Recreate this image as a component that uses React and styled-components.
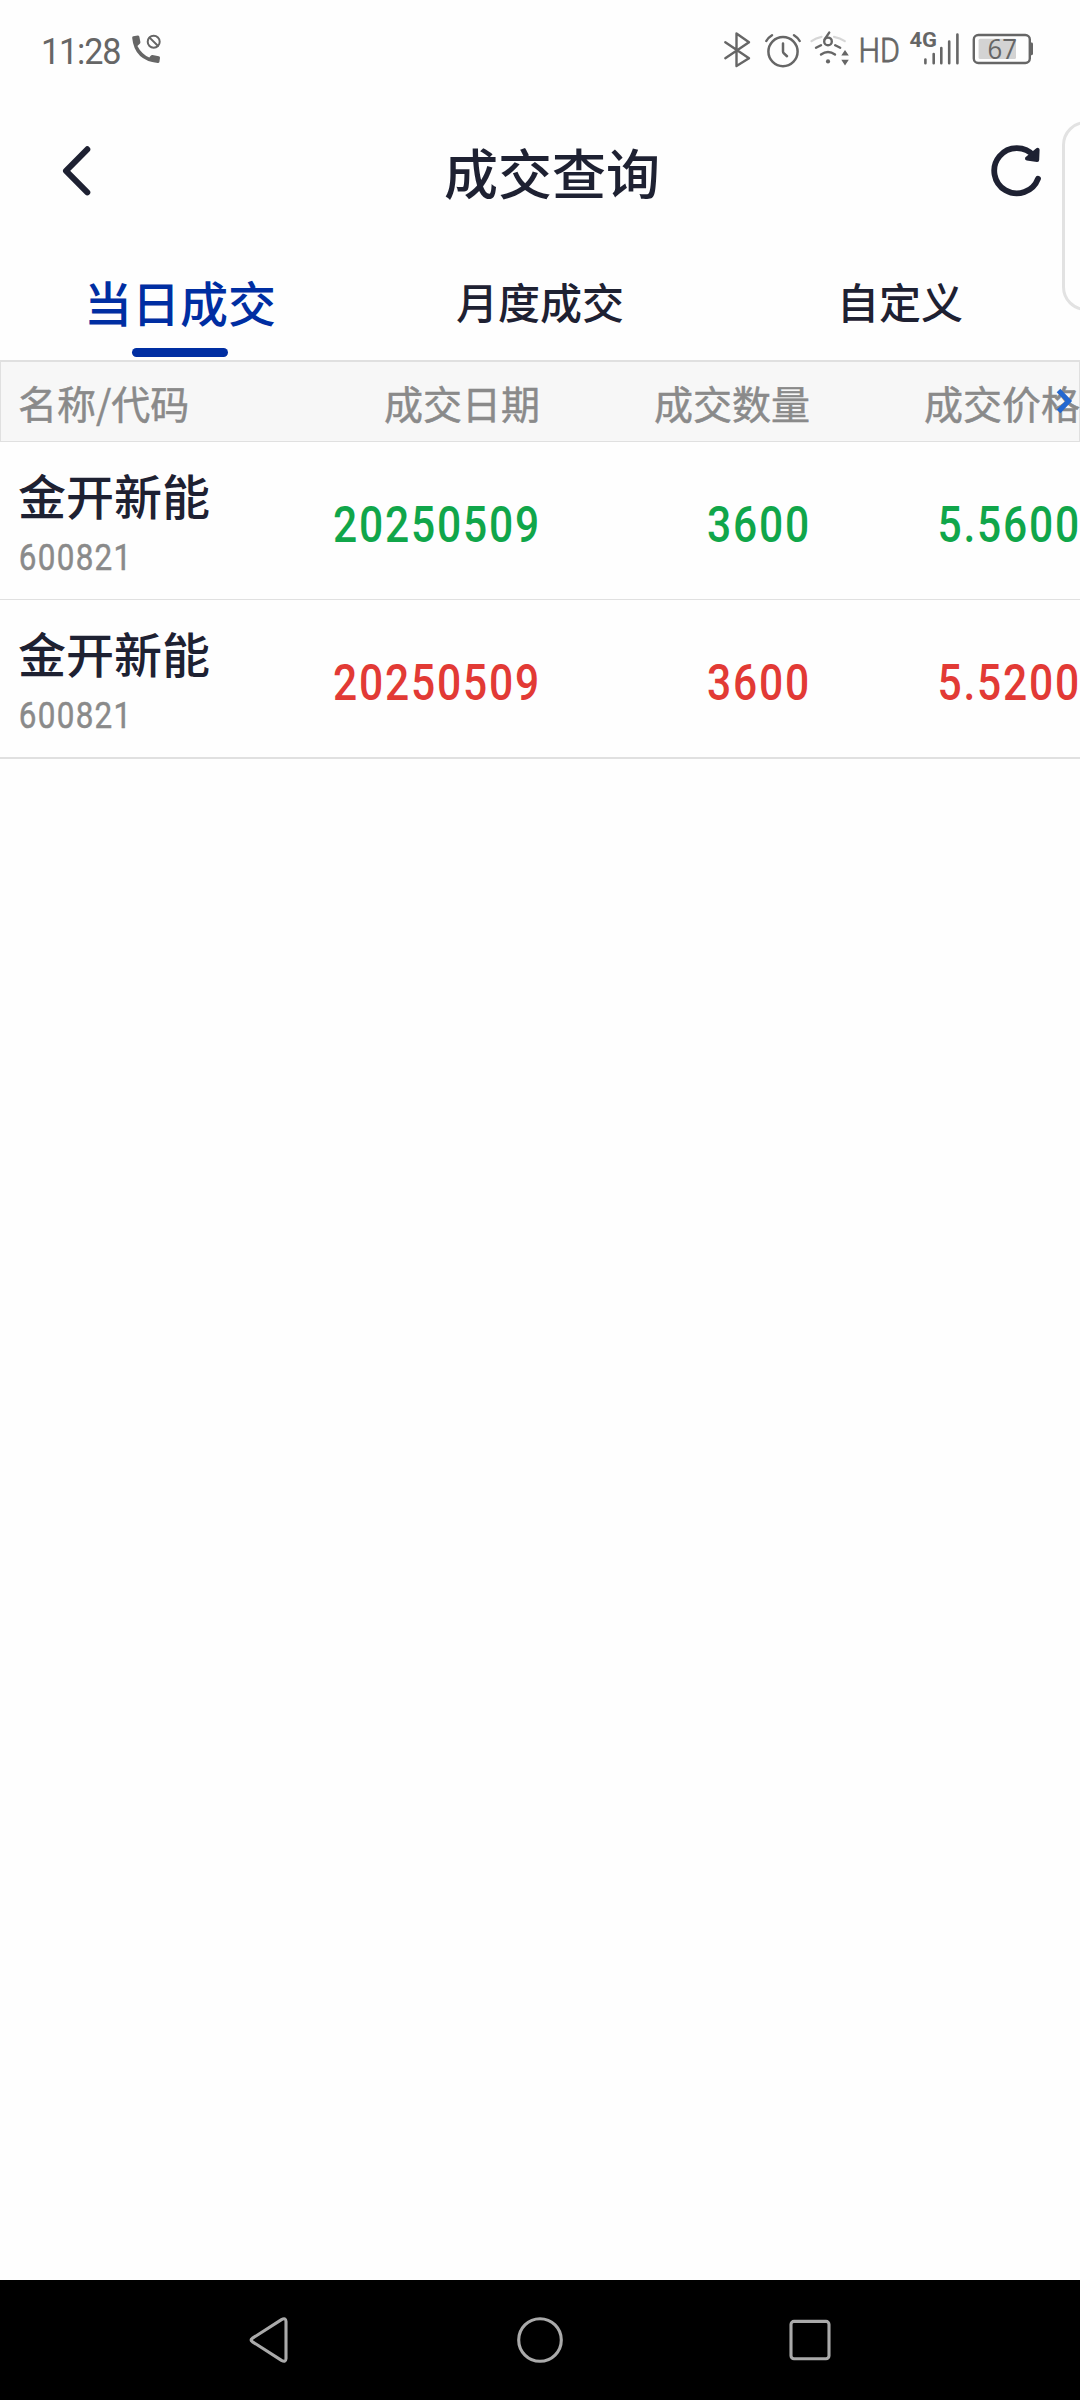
import React from "react";
import styled, { createGlobalStyle } from "styled-components";

const INK = "#1e2132";
const GRAY = "#8a8a8a";
const STATUS = "#666666";
const LINE = "#e0e0e0";
const BLUE = "#002ea2";

const Global = createGlobalStyle`
  * { box-sizing: border-box; }
  html, body { margin: 0; padding: 0; background: #fefefe; }
  body { font-family: "Noto Sans CJK SC", sans-serif; }
  svg { display: block; flex: none; }
`;

const Screen = styled.div`
  position: relative;
  width: 1080px;
  height: 2400px;
  display: flex;
  flex-direction: column;
  overflow: hidden;
  background: #fefefe;
`;

const StatusBar = styled.div`
  height: 96px;
  flex: none;
  display: flex;
  justify-content: space-between;
  padding: 0 40px 0 40px;
  color: ${STATUS};
`;

const StatusGroup = styled.div`
  display: flex;
  height: 96px;
`;

const Clock = styled.span`
  width: 88px;
  padding: 2px 0 0 1px;
  font: 400 36px/100px Roboto, sans-serif;
  letter-spacing: -1.2px;
  transform: scaleX(0.95);
  transform-origin: left;
`;

const TitleBar = styled.header`
  height: 150px;
  flex: none;
  display: flex;
  align-items: center;
  justify-content: space-between;
  padding: 0 34px 0 56px;
`;

const Title = styled.h1`
  margin: 0;
  padding: 2px 0 0 22px;
  font-size: 54px;
  line-height: 80px;
  font-weight: 500;
  color: ${INK};
`;

const TabBar = styled.nav`
  height: 114px;
  flex: none;
  display: grid;
  grid-template-columns: repeat(3, 1fr);
`;

const Tab = styled.div`
  display: flex;
  flex-direction: column;
  align-items: center;
  justify-content: space-between;
  padding: 20px 0 3px;
  font-size: ${(p) => (p.$active ? 48 : 42)}px;
  line-height: 70px;
  font-weight: 500;
  color: ${(p) => (p.$active ? BLUE : INK)};

  &::after {
    content: "";
    width: 96px;
    height: 9px;
    border-radius: 5px;
    background: ${(p) => (p.$active ? BLUE : "transparent")};
  }
`;

const HeadWrap = styled.div`
  position: relative;
  flex: none;
`;

const HeadRow = styled.div`
  height: 82px;
  display: grid;
  grid-template-columns: repeat(4, 270px);
  background: #f7f7f7;
  box-shadow: inset 1px 0 ${LINE}, inset -1px 0 ${LINE};
  border-top: 2px solid ${LINE};
  border-bottom: 1px solid ${LINE};
`;

const HeadCell = styled.div`
  padding-left: ${(p) => (p.$first ? 18 : 0)}px;
  text-align: ${(p) => (p.$first ? "left" : "right")};
  font-size: 39px;
  line-height: 80px;
  color: ${GRAY};
  -webkit-text-stroke: 0.5px ${GRAY};
  white-space: nowrap;
`;

const MoreArrow = styled.svg`
  position: absolute;
  right: 6px;
  top: 26px;
`;

const Row = styled.div`
  flex: none;
  height: ${(p) => (p.$last ? 159 : 158)}px;
  display: grid;
  grid-template-columns: repeat(4, 270px);
  border-bottom: ${(p) => (p.$last ? 2 : 1)}px solid ${LINE};
`;

const Stock = styled.div`
  display: flex;
  flex-direction: column;
  padding: 17px 0 0 18px;
`;

const StockName = styled.div`
  font-size: 48px;
  line-height: 70px;
  font-weight: 500;
  color: ${INK};
`;

const StockCode = styled.div`
  padding: 7px 0 0 1px;
  font: 400 36.5px/44px Roboto, sans-serif;
  letter-spacing: 1.5px;
  transform: scaleX(0.86);
  transform-origin: left;
  color: ${GRAY};
  -webkit-text-stroke: 0.5px ${GRAY};
`;

const Value = styled.div`
  padding-top: 4px;
  text-align: right;
  font: 500 49.5px/158px Roboto, sans-serif;
  letter-spacing: 2.1px;
  transform: scaleX(0.86) translateX(1.2px);
  transform-origin: right;
  color: ${(p) => (p.$side === "sell" ? "#10a64a" : "#e23a35")};
`;

const Spacer = styled.div`
  flex: 1;
`;

const SideHandle = styled.div`
  position: absolute;
  top: 121px;
  right: -30px;
  width: 48px;
  height: 190px;
  border: 3px solid #e2e2e2;
  border-radius: 28px;
  background: #fefefe;
`;

const NavBar = styled.footer`
  height: 120px;
  flex: none;
  display: flex;
  align-items: center;
  justify-content: center;
  gap: 210px;
  background: #000;
`;

const stroke = (width, color = STATUS) => ({
  fill: "none",
  stroke: color,
  strokeWidth: width,
  strokeLinecap: "round",
  strokeLinejoin: "round",
});

const StatusIcon = ({ x, w, children }) => (
  <svg width={w} height="96" viewBox={`${x} 0 ${w} 96`}>
    {children}
  </svg>
);

const CallBlocked = () => (
  <StatusIcon x={128} w={36}>
    <path
      fill={STATUS}
      d="M133.3 36.2 L137.8 35.5 Q139 35.5 139.3 36.5 L140.4 42 Q140.5 43 139.8 43.7 L137.4 46 Q141.5 54 149.3 57.6 L150.7 55.8 Q151.3 55 152.5 55.1 L158.8 56.2 Q160.1 56.5 160 57.7 L159.4 62 Q159.1 63.1 157.7 63 Q134.5 60.5 132.2 38 Q132 36.5 133.3 36.2Z"
    />
    <circle cx="153.7" cy="41.7" r="6" {...stroke(2)} />
    <path d="M149.6 37.6 L157.8 45.8" {...stroke(2)} />
  </StatusIcon>
);

const Bluetooth = () => (
  <StatusIcon x={720} w={40}>
    <path d="M725.3 42.2 L749 58.3 L736.5 66 V33.5 L749 42.2 L725.3 58.2" {...stroke(2.4)} />
  </StatusIcon>
);

const Alarm = () => (
  <StatusIcon x={760} w={48}>
    <g {...stroke(2.5)}>
      <circle cx="783" cy="51.6" r="14.6" />
      <path d="M783 43.5 V51.5 Q783 52.6 783.8 53.3 L787 56.2" />
      <path d="M766.3 41 Q768.3 37.4 772 35.2 M794 35.2 Q797.7 37.4 799.7 41" />
    </g>
  </StatusIcon>
);

const Wifi6 = () => (
  <StatusIcon x={808} w={48}>
    <path d="M811.5 41.2 Q816 37.8 821.5 36.8 M834 36.8 Q840 37.8 844.8 41.2" {...stroke(2.2, "#d6d6d6")} />
    <g {...stroke(2.4)}>
      <path d="M816 47.8 L821 45.2 M835.2 45.2 L840.2 47.8" />
      <path d="M821 54.6 Q828 49.6 835 54.6" />
      <path d="M829.2 32.6 L824.8 39.2" />
      <circle cx="828" cy="41.4" r="3.8" />
    </g>
    <circle cx="828" cy="61.4" r="2.1" fill={STATUS} />
    <path d="M841.3 55.6 L845 50 L848.8 55.6Z M841.3 59.8 L845 65.6 L848.8 59.8Z" fill={STATUS} />
  </StatusIcon>
);

const Hd = () => (
  <StatusIcon x={856} w={48}>
    <text
      x="858.4"
      y="62"
      fontFamily="Roboto, sans-serif"
      fontWeight="300"
      fontSize="33.5"
      textLength="41.5"
      lengthAdjust="spacingAndGlyphs"
      fill={STATUS}
      stroke={STATUS}
      strokeWidth="0.8"
    >
      HD
    </text>
  </StatusIcon>
);

const Signal = () => (
  <StatusIcon x={904} w={64}>
    <text
      x="909.5"
      y="46.5"
      fontFamily="Roboto, sans-serif"
      fontWeight="700"
      fontSize="20.5"
      textLength="27.5"
      lengthAdjust="spacingAndGlyphs"
      fill={STATUS}
    >
      4G
    </text>
    <path d="M925.4 59.5 V63.2 M933.7 54 V63.2 M941.3 48 V63.2 M949.2 41.5 V63.2 M957.4 34.6 V63.2" {...stroke(2.6)} />
  </StatusIcon>
);

const Battery = () => (
  <StatusIcon x={968} w={72}>
    <rect x="978.6" y="38.8" width="37.4" height="20.2" rx="1.5" fill="#d3d3d3" />
    <rect x="973.8" y="35" width="56" height="28" rx="4.5" {...stroke(2.4)} />
    <path d="M1030 42.6 H1031.6 Q1033 42.6 1033 44 V53.8 Q1033 55.2 1031.6 55.2 H1030Z" fill={STATUS} />
    <text
      x="987.5"
      y="59"
      fontFamily="'Open Sans', sans-serif"
      fontSize="27.5"
      fill={STATUS}
      textLength="29.5"
      lengthAdjust="spacingAndGlyphs"
    >
      67
    </text>
  </StatusIcon>
);

const BackIcon = () => (
  <svg width="40" height="60" viewBox="56 141 40 60">
    <path d="M87.3 149.3 L66 170.8 L87.3 192.3" {...stroke(6, INK)} />
  </svg>
);

const RefreshIcon = () => (
  <svg width="60" height="60" viewBox="986 141 60 60">
    <path d="M1034 156 A22.6 22.6 0 1 0 1038 178.7" {...stroke(5.8, INK)} />
    <path d="M1037.6 149.8 L1037.2 160 L1027 158.6Z" fill={INK} stroke={INK} strokeWidth="4" strokeLinejoin="round" />
  </svg>
);

const tabs = ["当日成交", "月度成交", "自定义"];
const columns = ["名称/代码", "成交日期", "成交数量", "成交价格"];
const trades = [
  { name: "金开新能", code: "600821", date: "20250509", qty: "3600", price: "5.5600", side: "sell" },
  { name: "金开新能", code: "600821", date: "20250509", qty: "3600", price: "5.5200", side: "buy" },
];

export default function App() {
  return (
    <Screen>
      <Global />
      <StatusBar>
        <StatusGroup>
          <Clock>11:28</Clock>
          <CallBlocked />
        </StatusGroup>
        <StatusGroup>
          <Bluetooth />
          <Alarm />
          <Wifi6 />
          <Hd />
          <Signal />
          <Battery />
        </StatusGroup>
      </StatusBar>

      <TitleBar>
        <BackIcon />
        <Title>成交查询</Title>
        <RefreshIcon />
      </TitleBar>

      <TabBar>
        {tabs.map((label, i) => (
          <Tab key={label} $active={i === 0}>
            {label}
          </Tab>
        ))}
      </TabBar>

      <HeadWrap>
        <HeadRow>
          {columns.map((label, i) => (
            <HeadCell key={label} $first={i === 0}>
              {label}
            </HeadCell>
          ))}
        </HeadRow>
        <MoreArrow width="20" height="30" viewBox="1054 386 20 30">
          <path d="M1058.5 390.5 L1068.6 401 L1058.5 411.5" fill="none" stroke="#2468d0" strokeWidth="5" />
        </MoreArrow>
      </HeadWrap>

      {trades.map((t, i) => (
        <Row key={t.side} $last={i === trades.length - 1}>
          <Stock>
            <StockName>{t.name}</StockName>
            <StockCode>{t.code}</StockCode>
          </Stock>
          <Value $side={t.side}>{t.date}</Value>
          <Value $side={t.side}>{t.qty}</Value>
          <Value $side={t.side}>{t.price}</Value>
        </Row>
      ))}

      <Spacer />
      <SideHandle />

      <NavBar>
        <svg width="60" height="60" viewBox="0 0 60 60">
          <path d="M12.2 28.4 L41.5 9.6 Q45.8 7.2 46 11.5 V48.5 Q45.8 52.8 41.5 50.4 L12.2 31.6 Q10 30 12.2 28.4Z" {...stroke(3.1, "#aaaaaa")} />
        </svg>
        <svg width="60" height="60" viewBox="0 0 60 60">
          <circle cx="30" cy="30" r="21.3" {...stroke(3.1, "#aaaaaa")} />
        </svg>
        <svg width="60" height="60" viewBox="0 0 60 60">
          <rect x="11" y="11.4" width="38" height="37.4" rx="3" {...stroke(3.1, "#aaaaaa")} />
        </svg>
      </NavBar>
    </Screen>
  );
}
